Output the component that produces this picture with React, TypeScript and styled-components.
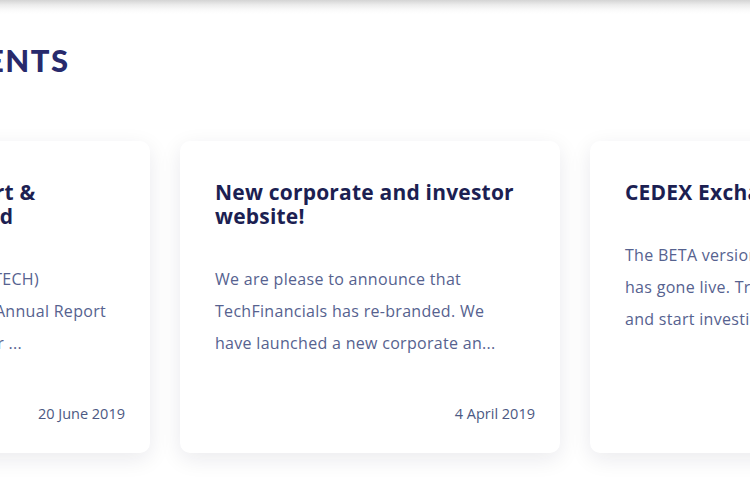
import React from "react";
import styled, { createGlobalStyle } from "styled-components";

const GlobalStyle = createGlobalStyle`
  html, body {
    margin: 0;
    padding: 0;
    background: #ffffff;
    overflow: hidden;
  }
  body {
    font-family: "Open Sans", sans-serif;
  }
`;

const Page = styled.div`
  width: 750px;
  height: 500px;
  overflow: hidden;
  background: #ffffff;
`;

const HeaderShadow = styled.div`
  height: 14px;
  background: linear-gradient(to bottom, #d4d4d4 0%, #ececec 35%, #fafafa 70%, #ffffff 100%);
`;

const HeadingRow = styled.div`
  width: 68px;
  display: flex;
  justify-content: flex-end;
  margin-top: 27px;
  height: 38px;
  align-items: center;
`;

const Heading = styled.h2`
  margin: 0;
  flex-shrink: 0;
  white-space: nowrap;
  font-family: "Lato", sans-serif;
  font-weight: 900;
  font-size: 31px;
  letter-spacing: 1.5px;
  margin-right: -1.5px;
  color: #282a6c;
  line-height: 38px;
`;

const Track = styled.div`
  display: flex;
  gap: 30px;
  margin-top: 62px;
  margin-left: -230px;
`;

const Card = styled.article`
  flex: 0 0 380px;
  height: 312px;
  box-sizing: border-box;
  background: #ffffff;
  border-radius: 10px;
  box-shadow: 0 6px 22px rgba(20, 24, 60, 0.09);
  padding: 39px 25px 29px 35px;
  display: flex;
  flex-direction: column;
`;

const Title = styled.h3`
  margin: 0;
  padding-right: 10px;
  font-family: "Open Sans", sans-serif;
  font-weight: 700;
  font-size: 21px;
  line-height: 24px;
  letter-spacing: 0.2px;
  color: #1c1f52;
`;

const Body = styled.p`
  margin: 35px 0 0;
  padding-right: 12px;
  font-family: "Open Sans", sans-serif;
  font-size: 16px;
  line-height: 32px;
  letter-spacing: 0.3px;
  color: #56628f;
`;

const DateLine = styled.div`
  margin-top: auto;
  text-align: right;
  font-family: "Open Sans", sans-serif;
  font-size: 14.5px;
  line-height: 20px;
  color: #4c5983;
`;

const news = [
  {
    title: "2018 Annual Report & Accounts Published",
    body: "TechFinancials Inc (AIM: TECH) announces that its 2018 Annual Report and Accounts for the year ...",
    date: "20 June 2019",
  },
  {
    title: "New corporate and investor website!",
    body: "We are please to announce that TechFinancials has re-branded. We have launched a new corporate an...",
    date: "4 April 2019",
  },
  {
    title: "CEDEX Exchange goes live",
    body: "The BETA version of CEDEX Exchange has gone live. Try the CEDEX platform and start investing ...",
    date: "12 March 2019",
  },
];

export default function App() {
  return (
    <Page>
      <GlobalStyle />
      <HeaderShadow />
      <HeadingRow>
        <Heading>ANNOUNCEMENTS</Heading>
      </HeadingRow>
      <Track>
        {news.map(item => (
          <Card key={item.title}>
            <Title>{item.title}</Title>
            <Body>{item.body}</Body>
            <DateLine>{item.date}</DateLine>
          </Card>
        ))}
      </Track>
    </Page>
  );
}
